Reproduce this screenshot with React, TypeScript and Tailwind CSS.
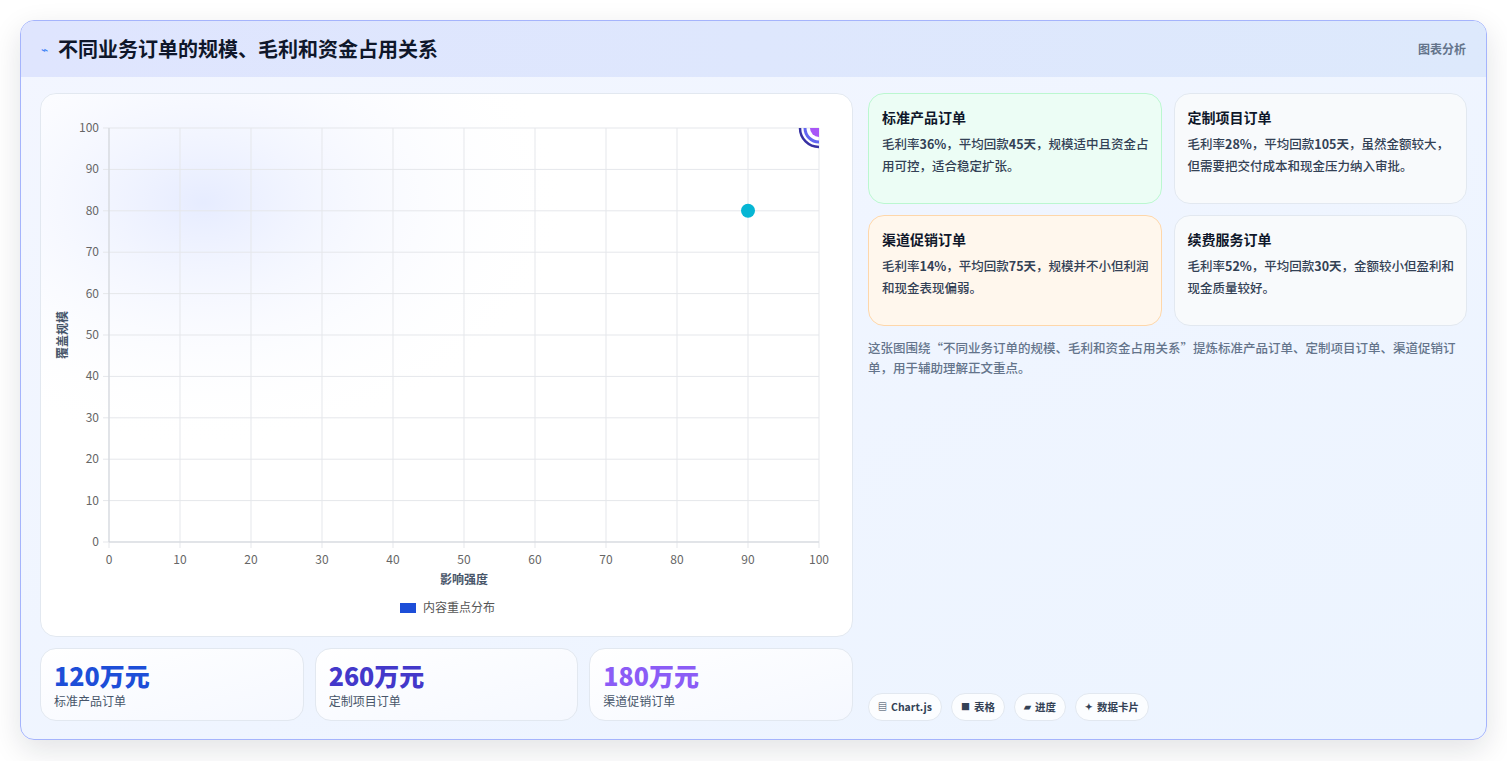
import React from 'react';

const font = { fontFamily: '"Noto Sans CJK SC", "Noto Sans", sans-serif' };

function Chart() {
  const L = 68, R = 778, T = 34, B = 448;
  const xs = Array.from({ length: 11 }, (_, i) => i * 10);
  const px = (v: number) => L + ((R - L) * v) / 100;
  const py = (v: number) => B - ((B - T) * v) / 100;
  return (
    <svg width="812" height="543" viewBox="0 0 812 543" className="block">
      <defs>
        <radialGradient id="glow" cx="0.2" cy="0.2" r="0.45">
          <stop offset="0" stopColor="#e0e7ff" stopOpacity="0.8" />
          <stop offset="1" stopColor="#ffffff" stopOpacity="0" />
        </radialGradient>
        <clipPath id="plot">
          <rect x={L} y={T} width={R - L} height={B - T} />
        </clipPath>
      </defs>
      <rect x="0" y="0" width="812" height="543" fill="url(#glow)" />
      {xs.map((v) => (
        <g key={v}>
          <line x1={px(v)} y1={T} x2={px(v)} y2={B + 6} stroke="#e5e7eb" />
          <line x1={L - 6} y1={py(v)} x2={R} y2={py(v)} stroke="#e5e7eb" />
          <text x={px(v)} y={B + 22} fontSize="12" fill="#666" textAnchor="middle">{v}</text>
          <text x={L - 10} y={py(v) + 4} fontSize="12" fill="#666" textAnchor="end">{v}</text>
        </g>
      ))}
      <line x1={L} y1={B} x2={R} y2={B} stroke="#d1d5db" />
      <line x1={L} y1={T} x2={L} y2={B} stroke="#d1d5db" />
      <text x={(L + R) / 2} y={B + 42} fontSize="12" fontWeight="700" fill="#475569" textAnchor="middle">影响强度</text>
      <text x="0" y="0" fontSize="12" fontWeight="700" fill="#475569" textAnchor="middle" transform={`translate(26 ${(T + B) / 2}) rotate(-90)`}>覆盖规模</text>
      <circle cx={px(90)} cy={py(80)} r="7" fill="#06b6d4" />
      <g clipPath="url(#plot)">
        <circle cx={px(100)} cy={py(100)} r="19" fill="none" stroke="#3730a3" strokeWidth="2.5" />
        <circle cx={px(100)} cy={py(100)} r="14" fill="none" stroke="#6366f1" strokeWidth="3" />
        <circle cx={px(100)} cy={py(100)} r="9" fill="#a855f7" />
      </g>
      <rect x="359" y="509" width="16" height="10" fill="#1d4ed8" />
      <text x="382" y="518" fontSize="12" fill="#555">内容重点分布</text>
    </svg>
  );
}

function InfoCard({ title, children, cls }: { title: string; children: React.ReactNode; cls: string }) {
  return (
    <div className={`rounded-2xl border pl-[13px] pr-[8px] pt-[13px] h-[111px] ${cls}`}>
      <div className="text-[14px] font-bold text-[#0f172a] mb-[5px]">{title}</div>
      <p className="text-[12.5px] leading-[22px] text-[#334155] font-medium">{children}</p>
    </div>
  );
}

function Stat({ value, label, color }: { value: string; label: string; color: string }) {
  return (
    <div className="flex-1 h-[73px] rounded-2xl border border-[#e2e8f0] bg-gradient-to-br from-white to-[#f5f8ff] px-[13px] pt-[9px]">
      <div className={`text-[25px] font-extrabold leading-[34px] ${color}`}>{value}</div>
      <div className="text-[12px] text-[#475569]">{label}</div>
    </div>
  );
}

function Badge({ icon, text }: { icon: string; text: string }) {
  return (
    <span className="h-[28px] px-[9px] flex items-center gap-1 rounded-full bg-white/80 border border-[#e2e8f0] text-[10.5px] font-bold text-[#334155]">
      <span className="text-[9px]">{icon}</span>
      {text}
    </span>
  );
}

export default function App() {
  return (
    <div style={font} className="w-[1507px] h-[761px] bg-white pt-[20px] px-[20px]">
      <div className="w-[1467px] h-[720px] rounded-[14px] border border-[#a5b4fc] overflow-hidden flex flex-col bg-gradient-to-br from-[#f3f6ff] to-[#ecf4ff] shadow-[0_10px_30px_rgba(15,23,42,0.12)]">
        <div className="h-[56px] shrink-0 bg-gradient-to-r from-[#dfe5fe] to-[#dde9fc] flex items-center justify-between px-[20px]">
          <div className="flex items-center gap-[10px]">
            <span className="text-[12px] text-[#3b82f6]">⌁</span>
            <h1 className="text-[20px] font-bold text-[#0f172a]">不同业务订单的规模、毛利和资金占用关系</h1>
          </div>
          <span className="text-[12px] font-bold text-[#64748b]">图表分析</span>
        </div>
        <div className="flex-1 flex gap-[15px] px-[19px] pt-[16px] pb-[18px]">
          <div className="w-[813px] flex flex-col gap-[11px]">
            <div className="h-[544px] rounded-2xl border border-[#e2e8f0] bg-white overflow-hidden">
              <Chart />
            </div>
            <div className="flex gap-[11px]">
              <Stat value="120万元" label="标准产品订单" color="text-[#1d4ed8]" />
              <Stat value="260万元" label="定制项目订单" color="text-[#4338ca]" />
              <Stat value="180万元" label="渠道促销订单" color="text-[#8b5cf6]" />
            </div>
          </div>
          <div className="flex-1 flex flex-col">
            <div className="grid grid-cols-2 gap-x-[12px] gap-y-[11px]">
              <InfoCard title="标准产品订单" cls="bg-[#ecfdf5] border-[#bbf7d0]">
                毛利率<b>36%</b>，平均回款<b>45天</b>，规模适中且资金占用可控，适合稳定扩张。
              </InfoCard>
              <InfoCard title="定制项目订单" cls="bg-[#f8fafc] border-[#e2e8f0]">
                毛利率<b>28%</b>，平均回款<b>105天</b>，虽然金额较大，但需要把交付成本和现金压力纳入审批。
              </InfoCard>
              <InfoCard title="渠道促销订单" cls="bg-[#fff7ed] border-[#fed7aa]">
                毛利率<b>14%</b>，平均回款<b>75天</b>，规模并不小但利润和现金表现偏弱。
              </InfoCard>
              <InfoCard title="续费服务订单" cls="bg-[#f8fafc] border-[#e2e8f0]">
                毛利率<b>52%</b>，平均回款<b>30天</b>，金额较小但盈利和现金质量较好。
              </InfoCard>
            </div>
            <p className="mt-[12px] text-[12.5px] leading-[20px] text-[#64748b] font-medium">
              这张图围绕“不同业务订单的规模、毛利和资金占用关系”提炼标准产品订单、定制项目订单、渠道促销订单，用于辅助理解正文重点。
            </p>
            <div className="mt-auto flex gap-[9px]">
              <Badge icon="▤" text="Chart.js" />
              <Badge icon="■" text="表格" />
              <Badge icon="▰" text="进度" />
              <Badge icon="✦" text="数据卡片" />
            </div>
          </div>
        </div>
      </div>
    </div>
  );
}
